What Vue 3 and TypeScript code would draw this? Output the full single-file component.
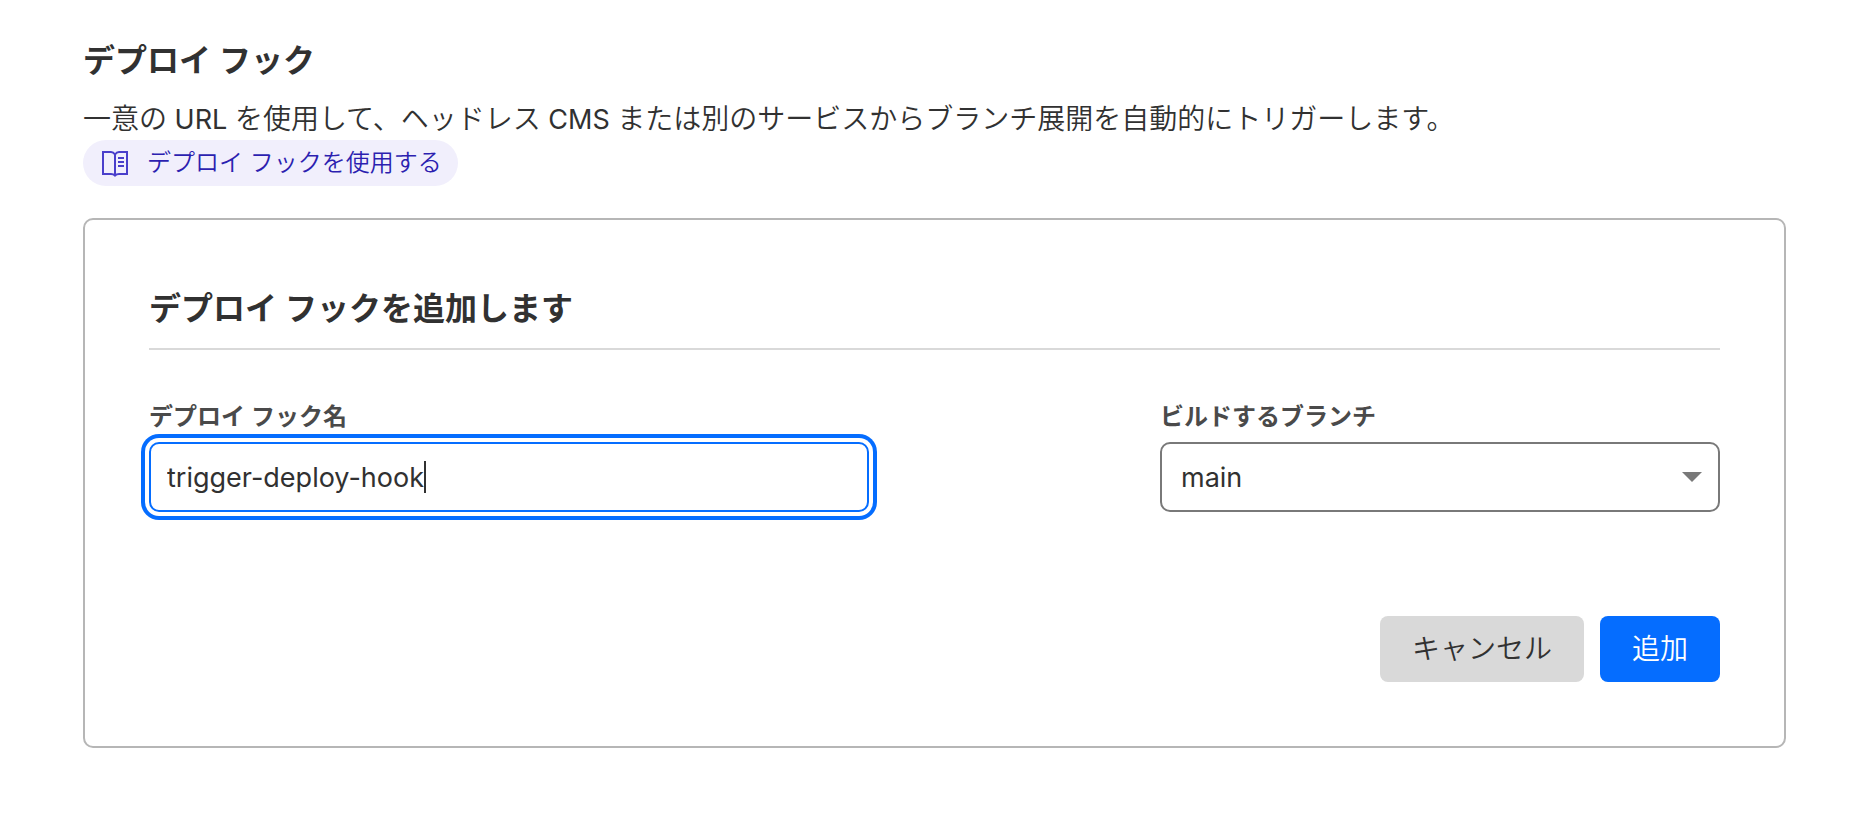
<script setup lang="ts">
import { onMounted, ref } from 'vue'

const hookName = ref('trigger-deploy-hook')
const branch = ref('main')
const branches: string[] = ['main']
const nameInput = ref<HTMLInputElement | null>(null)

onMounted(() => nameInput.value?.focus())
</script>

<template>
  <main class="page">
    <h1 class="title">デプロイ フック</h1>
    <p class="description">
      一意の<span class="latin"> URL </span>を使用して、ヘッドレス<span class="latin"> CMS </span>または別のサービスからブランチ展開を自動的にトリガーします。
    </p>
    <a class="doc-link" href="#">
      <svg class="book" viewBox="0 0 28 28" fill="none" stroke="currentColor" stroke-width="2" aria-hidden="true">
        <path d="M14 5.5C13 4 12 3 10 3H2v22h8c2 0 3 .5 4 1.5 1-1 2-1.5 4-1.5h8V3h-8c-2 0-3 1-4 2.5v21" />
        <path d="M17 9h6M17 13h6M17 17h6" />
      </svg>
      <span>デプロイ フックを使用する</span>
    </a>

    <form class="card" @submit.prevent>
      <h2 class="title card-title">デプロイ フックを追加します</h2>
      <div class="fields">
        <div class="field">
          <label for="hook-name">デプロイ フック名</label>
          <div class="control">
            <input id="hook-name" ref="nameInput" v-model="hookName" class="box name" type="text" autocomplete="off" spellcheck="false" />
            <span class="caret-track" aria-hidden="true"><span class="caret-offset">{{ hookName }}</span></span>
          </div>
        </div>
        <div class="field">
          <label for="branch">ビルドするブランチ</label>
          <div class="control">
            <select id="branch" v-model="branch" class="box branch">
              <option v-for="b in branches" :key="b" :value="b">{{ b }}</option>
            </select>
            <svg class="arrow" viewBox="0 0 20 10" aria-hidden="true"><path d="M0 0h20L10 10z" fill="currentColor" /></svg>
          </div>
        </div>
      </div>
      <div class="actions">
        <button class="btn cancel" type="button">キャンセル</button>
        <button class="btn add" type="submit">追加</button>
      </div>
    </form>
  </main>
</template>

<style>
body {
  background: #fff;
}
</style>

<style scoped>
.page,
.page * {
  box-sizing: border-box;
}

.page {
  padding: 40px 76px 80px 83px;
  color: #313131;
  font-family: Inter, "Noto Sans CJK JP", sans-serif;
  font-size: 28px;
  font-weight: 350;
}

.title {
  margin: 0;
  font-size: 32px;
  font-weight: 600;
  line-height: 42px;
}

.description {
  margin: 14px 0 0;
  padding-top: 2px;
  line-height: 42px;
}

.latin {
  font-size: 27px;
  font-weight: 400;
  line-height: 1;
}

.doc-link {
  display: flex;
  align-items: center;
  gap: 18px;
  width: fit-content;
  height: 46px;
  padding: 0 16px 0 18px;
  border-radius: 23px;
  background: #f1effc;
  color: #2c1fb0;
  font-size: 24px;
  line-height: 32px;
  text-decoration: none;
}

.book {
  width: 28px;
  height: 28px;
  color: #4a3fcb;
}

.card {
  margin-top: 32px;
  padding: 68px 64px 64px;
  border: 2px solid #b6b6b6;
  border-radius: 10px;
}

.card-title {
  padding-bottom: 18px;
  border-bottom: 2px solid #d9d9d9;
}

.fields {
  display: grid;
  grid-template-columns: 9fr 7fr;
  column-gap: 291px;
  margin-top: 48px;
}

.field label {
  display: block;
  margin-bottom: 6px;
  color: #4a4a4a;
  font-size: 24px;
  font-weight: 600;
  line-height: 38px;
}

.control {
  position: relative;
}

.box {
  display: block;
  width: 100%;
  height: 70px;
  border: 2px solid #797979;
  border-radius: 10px;
  background: #fff;
  color: #313131;
  font: inherit;
  font-size: 27px;
  font-weight: 400;
}

.name {
  padding: 0 16px;
  border-color: #056dff;
  caret-color: transparent;
  outline: none;
  box-shadow: 0 0 0 4px #fff, 0 0 0 8px #056dff;
}

.caret-track {
  position: absolute;
  inset: 0 18px;
  display: flex;
  align-items: center;
  overflow: hidden;
  color: transparent;
  font-size: 27px;
  font-weight: 400;
  line-height: 32px;
  pointer-events: none;
}

.caret-offset {
  border-right: 2px solid #313131;
}

.branch {
  padding: 0 56px 0 19px;
  appearance: none;
}

.arrow {
  position: absolute;
  top: 30px;
  right: 18px;
  width: 20px;
  height: 10px;
  color: #797979;
  pointer-events: none;
}

.actions {
  display: flex;
  justify-content: flex-end;
  gap: 16px;
  margin-top: 104px;
}

.btn {
  height: 66px;
  padding: 0 32px 4px;
  border: 0;
  border-radius: 8px;
  font: inherit;
}

.cancel {
  background: #d9d9d9;
  color: #313131;
}

.add {
  background: #056dff;
  color: #fff;
}
</style>
